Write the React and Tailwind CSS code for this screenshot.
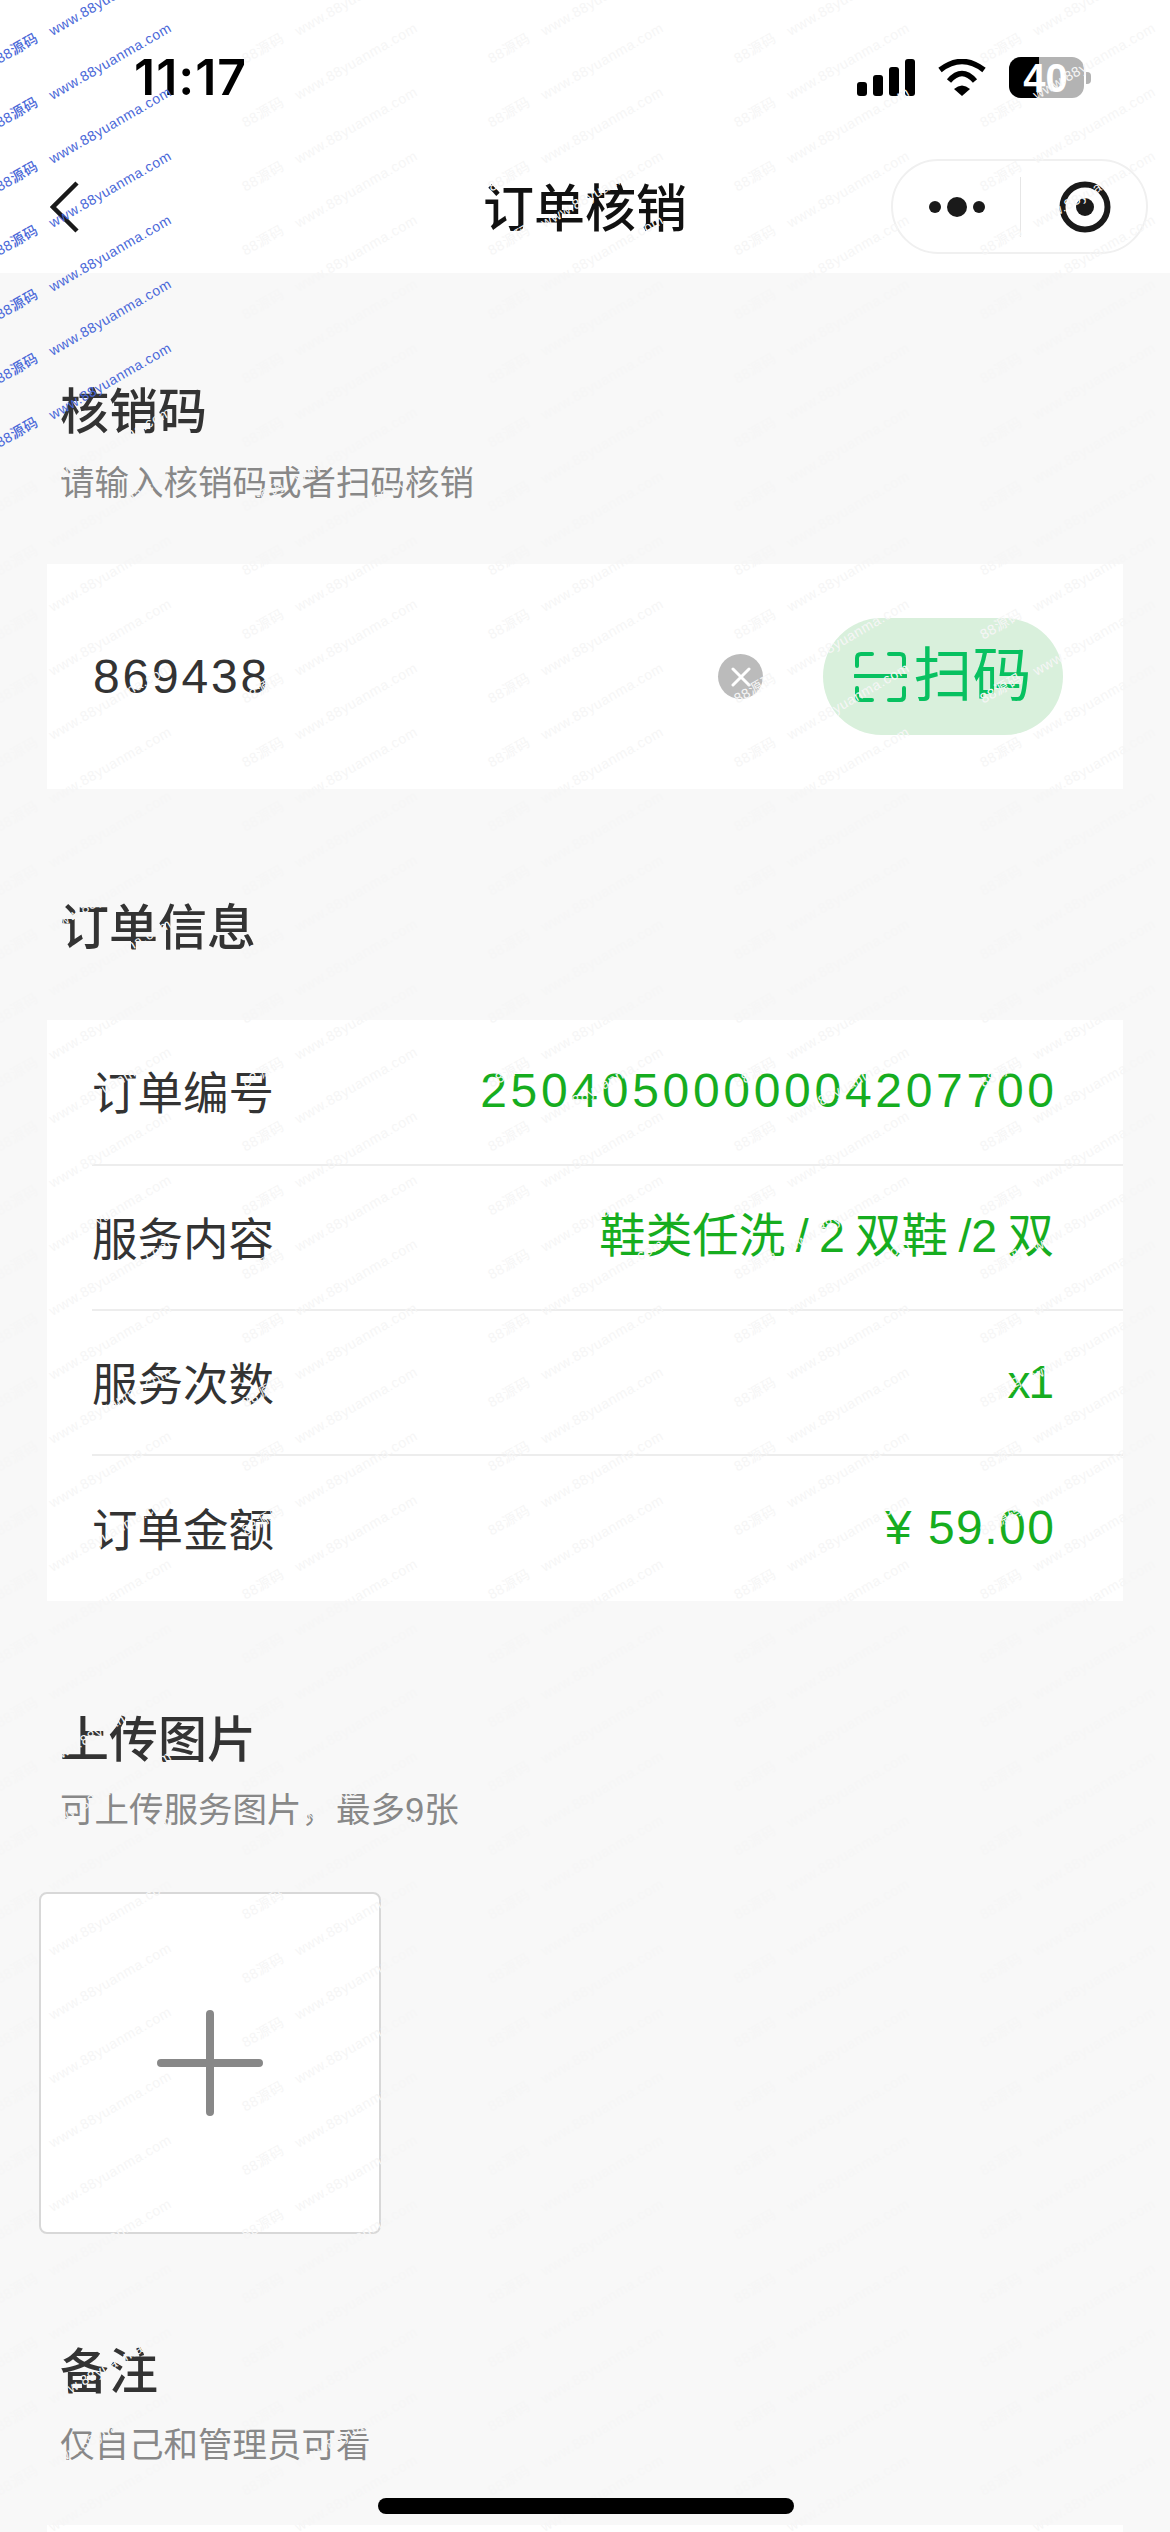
import React from "react";

const rows = [
  { label: "订单编号", value: "2504050000004207700", cls: "text-[48px] tracking-[3.7px] mr-[-3.7px]", h: "h-[144px]" },
  { label: "服务内容", value: "鞋类任洗 / 2 双鞋 /2 双", cls: "text-[46.5px] [word-spacing:-2.6px]", h: "h-[143px]" },
  { label: "服务次数", value: "x1", cls: "text-[46px] tracking-[-2px] mr-[2px]", h: "h-[143px]" },
  { label: "订单金额", value: "¥ 59.00", cls: "text-[48px] tracking-[1.5px] mr-[-1.5px]", h: "h-[145px]" },
];

function SectionHead({ title, sub, subCls }) {
  return (
    <div className="pl-[60px]">
      <div className="h-[60px] text-[49px] leading-[60px] font-medium text-[#333]">{title}</div>
      {sub && <div className={"h-[44px] text-[34.5px] leading-[44px] text-[#888] " + subCls}>{sub}</div>}
    </div>
  );
}

function Watermarks() {
  const faint = [];
  const blue = [];
  for (let m = -1; m < 39; m++) {
    for (let k = 0; k < 5; k++) {
      const wx = 110 + 246 * k;
      const wy = 61 + 64 * m;
      const sx = 17 + 246 * k;
      const sy = 48 + 64 * m;
      if (k === 0 && m <= 5) {
        blue.push({ t: "www.88yuanma.com", x: wx, y: wy });
      } else {
        faint.push({ t: "www.88yuanma.com", x: wx, y: wy });
      }
      if (k === 0 && m <= 6) {
        blue.push({ t: "88源码", x: sx, y: sy });
      } else {
        faint.push({ t: "88源码", x: sx, y: sy });
      }
    }
  }
  return (
    <div className="pointer-events-none absolute inset-0 overflow-hidden">
      {faint.map((w, i) => (
        <span
          key={i}
          className="absolute -translate-x-1/2 -translate-y-1/2 -rotate-[30deg] whitespace-nowrap text-[14px] leading-none tracking-[0.6px] text-[#f6f6f6]"
          style={{ left: w.x, top: w.y }}
        >
          {w.t}
        </span>
      ))}
      {blue.map((w, i) => (
        <span
          key={i}
          className="absolute -translate-x-1/2 -translate-y-1/2 -rotate-[30deg] whitespace-nowrap text-[14px] leading-none font-medium tracking-[0.6px] text-[#4a68d8]"
          style={{ left: w.x, top: w.y }}
        >
          {w.t}
        </span>
      ))}
    </div>
  );
}

function Signal() {
  return (
    <svg width="58" height="37" viewBox="0 0 58 37" className="block">
      <rect x="0" y="23" width="10" height="14" rx="3" fill="#000" />
      <rect x="16" y="16" width="10" height="21" rx="3" fill="#000" />
      <rect x="32" y="8" width="10" height="29" rx="3" fill="#000" />
      <rect x="48" y="0" width="10" height="37" rx="3" fill="#000" />
    </svg>
  );
}

function Wifi() {
  return (
    <svg width="50" height="37" viewBox="0 0 50 37" className="block" fill="none">
      <path d="M3 11 Q25 -6 47 11" stroke="#000" strokeWidth="5.5" />
      <path d="M12 22 Q25 7 38 22" stroke="#000" strokeWidth="5.5" />
      <path d="M17 30 L25 37 L33 30 Q25 23 17 30 Z" fill="#000" />
    </svg>
  );
}

function Battery() {
  return (
    <div className="flex items-center gap-[2px]">
      <div className="relative flex h-[41px] w-[75px] overflow-hidden rounded-[12px] bg-[#b3b3b3]">
        <div className="h-full w-[30px] bg-black" />
        <div className="absolute inset-0 flex items-center justify-center pr-[2px] text-[40px] leading-none font-bold text-white">40</div>
      </div>
      <div className="h-[12px] w-[5px] rounded-r-[4px] bg-[#b3b3b3]" />
    </div>
  );
}

function ScanIcon() {
  return (
    <svg width="53" height="50" viewBox="0 0 53 50" fill="none" stroke="#07c160" strokeWidth="4" strokeLinecap="round" className="block">
      <path d="M3 14 V6 Q3 2 7 2 H18" />
      <path d="M35 2 H46 Q50 2 50 6 V14" />
      <path d="M3 36 V44 Q3 48 7 48 H18" />
      <path d="M35 48 H46 Q50 48 50 44 V36" />
      <path d="M1 24 H52" />
    </svg>
  );
}

export default function App() {
  return (
    <div className="relative h-[2532px] w-[1170px] overflow-hidden bg-[#f8f8f8] font-['Liberation_Sans','Noto_Sans_CJK_SC',sans-serif]">
      <header className="h-[273px] bg-white">
        <div className="flex items-center justify-between pt-[57px] pr-[79px] pl-[134px]">
          <div className="h-[41px] font-['Inter',sans-serif] text-[50px] leading-[41px] font-semibold tracking-[1px] text-black">11:17</div>
          <div className="flex items-center">
            <Signal />
            <div className="ml-[22px]"><Wifi /></div>
            <div className="ml-[22px]"><Battery /></div>
          </div>
        </div>
        <div className="mt-[61px] grid h-[95px] grid-cols-[1fr_auto_1fr] items-center">
          <div className="pl-[50px]">
            <svg width="30" height="52" viewBox="0 0 30 52" fill="none" className="block">
              <path d="M27 2 L3 26 L27 50" stroke="#1a1a1a" strokeWidth="4.5" />
            </svg>
          </div>
          <div className="pt-[6px] text-[51px] leading-[60px] font-medium text-[#111]">订单核销</div>
          <div className="flex justify-end pr-[22px]">
            <div className="flex h-[95px] w-[257px] items-center rounded-full border-2 border-[#f0f0f0]">
              <div className="flex w-[127px] items-center justify-center gap-[6px]">
                <span className="h-[12px] w-[12px] rounded-full bg-[#1a1a1a]" />
                <span className="h-[20px] w-[20px] rounded-full bg-[#1a1a1a]" />
                <span className="h-[12px] w-[12px] rounded-full bg-[#1a1a1a]" />
              </div>
              <div className="h-[60px] w-[1px] bg-[#e6e6e6]" />
              <div className="flex flex-1 items-center justify-center pl-[3px]">
                <svg width="52" height="52" viewBox="0 0 52 52" className="block">
                  <circle cx="26" cy="26" r="22.5" fill="none" stroke="#1a1a1a" strokeWidth="6" />
                  <circle cx="26" cy="26" r="9" fill="#1a1a1a" />
                </svg>
              </div>
            </div>
          </div>
        </div>
      </header>

      <main>
        <section className="pt-[109px]">
          <SectionHead title="核销码" sub="请输入核销码或者扫码核销" subCls="mt-[19px]" />
          <div className="mx-[47px] mt-[59px] flex h-[225px] items-center bg-white pr-[60px] pl-[46px]">
            <div className="flex-1 text-[48px] leading-none tracking-[2.8px] text-[#333]">869438</div>
            <div className="flex h-[45px] w-[45px] items-center justify-center rounded-full bg-[#bbbbbb]">
              <svg width="20" height="20" viewBox="0 0 20 20" fill="none" stroke="#fff" strokeWidth="3" strokeLinecap="round" className="block">
                <path d="M2 2 L18 18 M18 2 L2 18" />
              </svg>
            </div>
            <div className="ml-[60px] flex h-[117px] w-[240px] items-center justify-center gap-[6px] rounded-full bg-[#d9f0dc]">
              <ScanIcon />
              <span className="text-[59px] leading-none text-[#07c160]">扫码</span>
            </div>
          </div>
        </section>

        <section className="pt-[109px]">
          <SectionHead title="订单信息" />
          <div className="mx-[47px] mt-[62px] bg-white">
            {rows.map((r, i) => (
              <div key={r.label} className={i === 0 ? "ml-[45px]" : "ml-[45px] border-t-2 border-[#ededed]"}>
                <div className={"flex items-center justify-between pt-[6px] pr-[69px] " + r.h}>
                  <span className="text-[45.5px] leading-none text-[#333]">{r.label}</span>
                  <span className={"mb-[8px] leading-none text-[#16ad1f] " + r.cls}>{r.value}</span>
                </div>
              </div>
            ))}
          </div>
        </section>

        <section className="pt-[109px]">
          <SectionHead title="上传图片" sub="可上传服务图片，最多9张" subCls="mt-[18px]" />
          <div className="mt-[60px] ml-[39px] flex h-[342px] w-[342px] items-center justify-center rounded-[8px] border-2 border-[#d8d8d8] bg-white">
            <svg width="106" height="106" viewBox="0 0 106 106" fill="none" stroke="#888" strokeWidth="8" strokeLinecap="round" className="block">
              <path d="M53 4 V102 M4 53 H102" />
            </svg>
          </div>
        </section>

        <section className="pt-[108px]">
          <SectionHead title="备注" sub="仅自己和管理员可看" subCls="mt-[21px]" />
          <div className="mx-[47px] mt-[58px] h-[100px] bg-white" />
        </section>
      </main>

      <Watermarks />

      <div className="absolute bottom-[18px] left-[378px] h-[16px] w-[416px] rounded-full bg-black" />
    </div>
  );
}
